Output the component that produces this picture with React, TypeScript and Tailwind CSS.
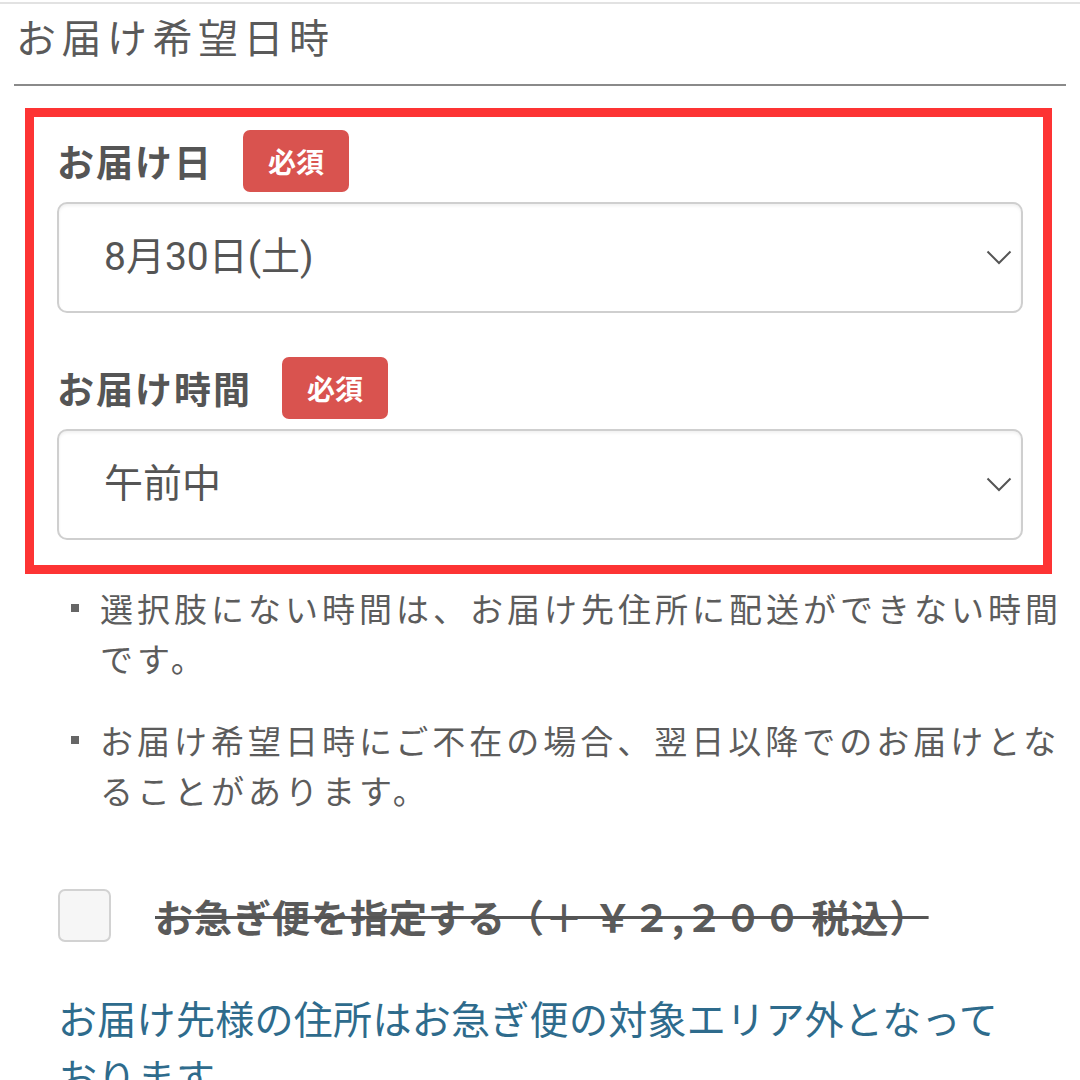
import React from 'react';

const font = { fontFamily: '"Noto Sans CJK JP", "Noto Sans", sans-serif' };
const valueFont = { fontFamily: 'Roboto, "Noto Sans CJK JP", sans-serif' };

function Badge() {
  return (
    <span className="ml-[30px] inline-flex h-[62px] w-[106px] items-center justify-center rounded-[7px] bg-[#d9534f] text-[28px] font-bold leading-none text-white">
      必須
    </span>
  );
}

function Chevron() {
  return (
    <svg width="26" height="15" viewBox="0 0 26 15" fill="none" className="shrink-0">
      <polyline points="1.5,1.5 13,13 24.5,1.5" stroke="#555" strokeWidth="2" />
    </svg>
  );
}

function FakeSelect({ value }: { value: string }) {
  return (
    <div className="flex h-[111px] items-center justify-between rounded-[10px] border-2 border-[#cfcfcf] bg-white pl-[45px] pr-[9px] shadow-[inset_0_2px_3px_rgba(0,0,0,0.06)]">
      <span className="text-[39px] leading-none text-[#555]" style={valueFont}>
        {value}
      </span>
      <Chevron />
    </div>
  );
}

function Field({ label, value, top }: { label: string; value: string; top: string }) {
  return (
    <div className={top}>
      <div className="flex items-center">
        <span className="text-[37px] font-bold leading-none tracking-[2px] text-[#555]">{label}</span>
        <Badge />
      </div>
      <div className="mt-[10px]">
        <FakeSelect value={value} />
      </div>
    </div>
  );
}

const notes = [
  '選択肢にない時間は、お届け先住所に配送ができない時間です。',
  'お届け希望日時にご不在の場合、翌日以降でのお届けとなることがあります。',
];

export default function App() {
  return (
    <div className="min-h-[1080px] w-[1080px] overflow-hidden bg-white px-[14px]" style={font}>
      {/* top rule */}
      <div className="-mx-[14px] mt-[2px] h-[2px] bg-[#e2e2e2]" />

      {/* section heading */}
      <div className="pl-[2px] pt-[3px] text-[40px] leading-[58px] tracking-[5.5px] text-[#5a5a5a]">お届け希望日時</div>
      <div className="mt-[19px] h-[2px] bg-[#8a8a8a]" />

      {/* highlighted fields */}
      <div className="ml-[11px] mr-[14px] mt-[22px] border-[9px] border-[#fd3434] pb-[25px] pl-[23px] pr-[20px] pt-[13px]">
        <Field label="お届け日" value="8月30日(土)" top="" />
        <Field label="お届け時間" value="午前中" top="mt-[44px]" />
      </div>

      {/* notes */}
      <ul className="mt-[9px] flex flex-col gap-[32px] pl-[57px]">
        {notes.map((n) => (
          <li key={n} className="flex items-start">
            <span className="mt-[21px] h-[8px] w-[8px] shrink-0 bg-[#666]" />
            <span className="ml-[21px] text-[33px] leading-[50px] tracking-[4px] text-[#5c5c5c]">{n}</span>
          </li>
        ))}
      </ul>

      {/* express option */}
      <div className="ml-[44px] mt-[74px] flex items-center">
        <span className="h-[53px] w-[53px] shrink-0 rounded-[7px] border-2 border-[#d2d2d2] bg-[#f6f6f6]" />
        <span className="ml-[44px] text-[38px] font-bold leading-[53px] tracking-[1px] text-[#5a5a5a] line-through decoration-[#555] decoration-[3px]">
          お急ぎ便を指定する（＋ ￥２,２００ 税込）
        </span>
      </div>

      <p className="ml-[44px] mr-[43px] mt-[46px] text-[39px] leading-[58px] tracking-[0.3px] text-[#2e6b8c]">
        お届け先様の住所はお急ぎ便の対象エリア外となっております。
      </p>
    </div>
  );
}
